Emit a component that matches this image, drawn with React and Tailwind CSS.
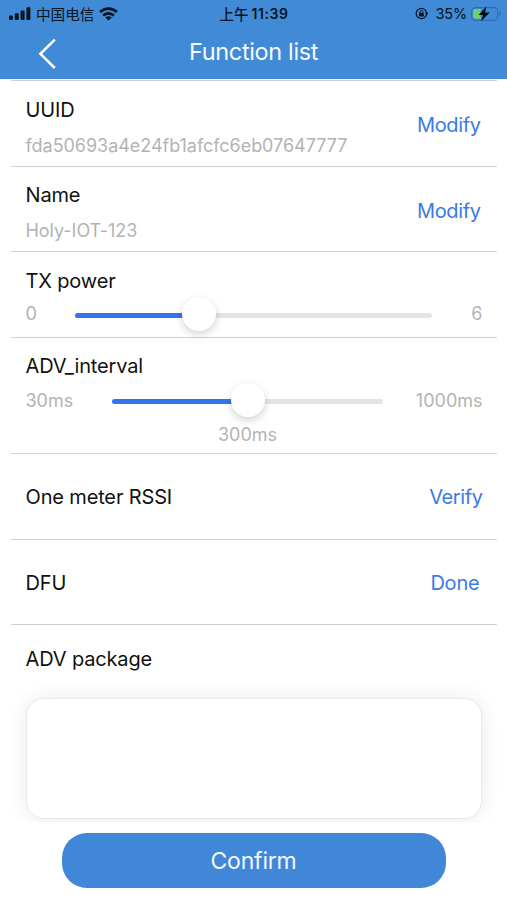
function SignalIcon() {
  return (
    <svg width="22" height="14" viewBox="0 0 22 14" fill="#071422">
      <rect x="0" y="8.6" width="4" height="4.4" rx="1.2" />
      <rect x="5.8" y="6.2" width="4" height="6.8" rx="1.2" />
      <rect x="11.6" y="3.4" width="4" height="9.6" rx="1.2" />
      <rect x="17.4" y="0.2" width="4" height="12.8" rx="1.2" />
    </svg>
  );
}

function WifiIcon() {
  return (
    <svg width="19" height="14" viewBox="0 0 19 14" fill="none" stroke="#071422" strokeWidth="2.7">
      <path d="M1.1 5C5.8.4 13.2.4 17.9 5" />
      <path d="M4.2 8.6C7.2 5.7 11.8 5.7 14.8 8.6" />
      <path d="M9.5 13.6L6.3 10.6C8.2 8.9 10.8 8.9 12.7 10.6Z" fill="#071422" stroke="none" />
    </svg>
  );
}

function RotationLockIcon() {
  return (
    <svg width="14" height="13" viewBox="0 0 14 13" fill="none" stroke="#071422">
      <circle cx="6.4" cy="6.5" r="5.2" strokeWidth="1.2" />
      <path d="M10 5.8H13.4L11.7 8.2Z" fill="#071422" stroke="none" />
      <rect x="4" y="5.8" width="4.8" height="3.6" rx="0.6" fill="#071422" stroke="none" />
      <path d="M5 6V4.8a1.4 1.4 0 0 1 2.8 0V6" strokeWidth="0.9" />
    </svg>
  );
}

function BatteryIcon() {
  return (
    <svg width="31" height="16" viewBox="0 0 31 16">
      <rect x="0.6" y="1.6" width="26.2" height="12.6" rx="3.6" fill="none" stroke="#326aa6" strokeWidth="1.1" />
      <path d="M4.6 3H9.5V12.8H4.6A2.5 2.5 0 0 1 2.1 10.3V5.5A2.5 2.5 0 0 1 4.6 3Z" fill="#6bd26d" />
      <path d="M28.4 5.7c1.8.7 1.8 3.7 0 4.4z" fill="#326aa6" />
      <path d="M15.4 0.6L7.6 9.1H12L10 15.2L18.8 6.6H14Z" fill="#030a12" />
    </svg>
  );
}

function Header() {
  return (
    <header className="h-[79px] bg-[#418ad6]">
      <div className="grid h-[27px] grid-cols-[1fr_auto_1fr] items-center pl-[9px] pr-[5px] text-[#071422]">
        <div className="flex items-center">
          <SignalIcon />
          <span className="ml-[5px] mr-[5px] font-['Noto_Sans_CJK_SC',sans-serif] text-[14.6px] leading-[27px]">中国电信</span>
          <WifiIcon />
        </div>
        <div className="mr-[3px] flex items-center gap-[3px] text-[14px] font-semibold leading-[27px]">
          <span className="font-['Noto_Sans_CJK_SC',sans-serif] text-[14.5px] font-medium">上午</span>
          <span className="tracking-[0.6px]">11:39</span>
        </div>
        <div className="flex items-center justify-end">
          <RotationLockIcon />
          <span className="ml-[7px] mr-[4px] text-[14.5px] leading-[27px] tracking-[-0.2px]">35%</span>
          <BatteryIcon />
        </div>
      </div>
      <div className="flex h-[52px] items-center">
        <button className="ml-[38px] w-[20px]" aria-label="Back">
          <svg width="20" height="32" viewBox="0 0 20 32" fill="none" stroke="#fff" strokeWidth="2.5">
            <path d="M16.8 2.6L2.4 16.8L16.8 31" />
          </svg>
        </button>
        <h1 className="mb-[2px] ml-[131px] text-[23.5px] leading-[48px] tracking-[-0.35px] text-[#f4faff]">Function list</h1>
      </div>
    </header>
  );
}

function Label({ children }) {
  return <div className="text-[20px] leading-[24px] tracking-[-0.15px] text-[#111]">{children}</div>;
}

function ActionRow({ label, value, action, actionClass }) {
  return (
    <section className="flex h-[85.6px] items-center justify-between border-b-[1.5px] border-[#d0d0d2] pl-[15px] pt-[2px]">
      <div className={value ? "pt-[6px]" : ""}>
        <Label>{label}</Label>
        {value && <div className="mt-[13px] text-[18px] leading-[22px] tracking-[-0.04px] text-[#b3b3b3]">{value}</div>}
      </div>
      <button className={`text-[20px] leading-[24px] text-[#387ae8] ${actionClass}`}>{action}</button>
    </section>
  );
}

function Slider({ className, percent }) {
  return (
    <div className={`relative top-px h-[5px] rounded-full bg-[#e4e4e4] ${className}`}>
      <div className="h-full rounded-full bg-[#3575eb]" style={{ width: `${percent}%` }} />
      <div
        className="absolute top-[-16px] -ml-[17px] size-[34px] rounded-full bg-white shadow-[0_3px_8px_rgba(0,0,0,0.18)]"
        style={{ left: `${percent}%` }}
      />
    </div>
  );
}

export default function App() {
  return (
    <main className="flex h-[900px] w-[507px] flex-col overflow-hidden bg-white font-[Inter,'Liberation_Sans',sans-serif]">
      <Header />
      <div className="h-[743px] overflow-hidden px-[10.5px] pt-px">
        <div className="border-t-[1.5px] border-[#d0d0d2]">
          <ActionRow label="UUID" value="fda50693a4e24fb1afcfc6eb07647777" action="Modify" actionClass="mr-[16px] mt-[2px] tracking-[-0.4px]" />
          <ActionRow label="Name" value="Holy-IOT-123" action="Modify" actionClass="mr-[16px] mt-[2px] tracking-[-0.4px]" />
          <section className="h-[85.5px] border-b-[1.5px] border-[#d0d0d2] px-[15px] pt-[17px]">
            <Label>TX power</Label>
            <div className="mt-[10px] flex items-center text-[18px] leading-[22px] text-[#b3b3b3]">
              <span className="w-[49.5px]">0</span>
              <Slider className="w-[357px]" percent={34.8} />
              <span className="ml-auto mr-[-1px]">6</span>
            </div>
          </section>
          <section className="h-[116.5px] border-b-[1.5px] border-[#d0d0d2] px-[15px] pt-[16px]">
            <Label>ADV_interval</Label>
            <div className="mt-[12px] flex items-center text-[18px] leading-[22px] text-[#b3b3b3]">
              <span className="w-[86px]">30ms</span>
              <Slider className="w-[271.5px]" percent={50.4} />
              <span className="ml-auto mr-[-1px]">1000ms</span>
            </div>
            <div className="mt-[12px] pr-[12px] text-center text-[18px] leading-[22px] text-[#b3b3b3]">300ms</div>
          </section>
          <ActionRow label="One meter RSSI" action="Verify" actionClass="mr-[14px] tracking-[-0.4px]" />
          <ActionRow label="DFU" action="Done" actionClass="mr-[17px] tracking-[-0.2px]" />
          <section className="px-[15px] pt-[22px]">
            <Label>ADV package</Label>
            <div className="mt-[27px] h-[121px] rounded-[18px] border-[1.5px] border-[#e9e9e9] bg-white shadow-[0_0_20px_rgba(0,0,0,0.09)]" />
          </section>
        </div>
      </div>
      <footer className="flex justify-center pt-[11px]">
        <button className="h-[55px] w-[384px] rounded-[25px] bg-[#4187d7] text-[23px] leading-[57px] tracking-[-0.2px] text-[#f0f8ff]">Confirm</button>
      </footer>
    </main>
  );
}
